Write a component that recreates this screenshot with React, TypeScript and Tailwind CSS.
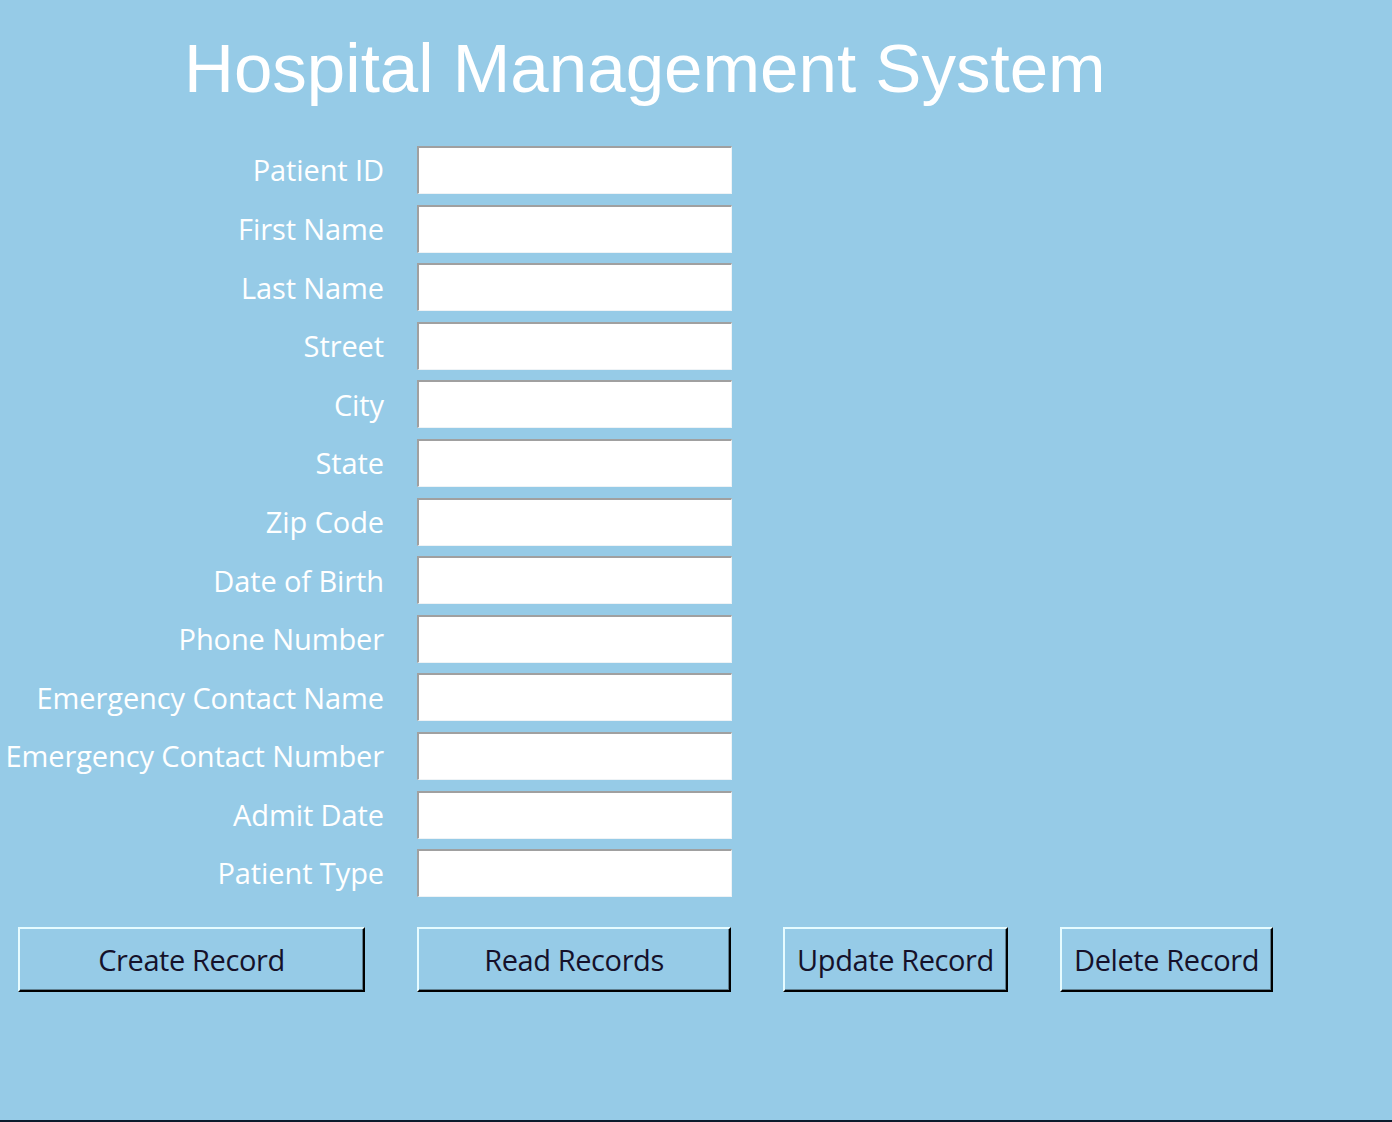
import React from 'react';

const FIELDS = [
  'Patient ID',
  'First Name',
  'Last Name',
  'Street',
  'City',
  'State',
  'Zip Code',
  'Date of Birth',
  'Phone Number',
  'Emergency Contact Name',
  'Emergency Contact Number',
  'Admit Date',
  'Patient Type',
];

const BUTTONS = [
  { label: 'Create Record', width: 'w-[347px]' },
  { label: 'Read Records', width: 'w-[314px]' },
  { label: 'Update Record', width: 'w-[225px]' },
  { label: 'Delete Record', width: 'w-[213px]' },
];

const App: React.FC = () => {
  return (
    <div className="h-[1122px] w-[1392px] overflow-hidden bg-[#96cbe7] border-b-2 border-[#0c1b2c] font-['Open_Sans','Noto_Sans',sans-serif]">
      <h1 className="pt-[34px] pl-[184px] text-[69.1px] leading-none font-normal text-white font-['Liberation_Sans',Arial,sans-serif]">
        Hospital Management System
      </h1>

      <div className="mt-[43px] grid grid-cols-[384px_315px] gap-x-[33px] gap-y-[10.6px]">
        {FIELDS.map((name) => (
          <React.Fragment key={name}>
            <label className="flex h-[48px] items-center justify-end whitespace-nowrap text-[29px] tracking-[-0.1px] text-white">
              {name}
            </label>
            <input
              type="text"
              className="h-[48px] w-[315px] bg-white border-t-2 border-l-2 border-r border-b border-t-[#a0a0a0] border-l-[#a0a0a0] border-r-[#eef3f6] border-b-[#eef3f6] outline-none"
            />
          </React.Fragment>
        ))}
      </div>

      <div className="mt-[30px] flex gap-[52px] pl-[18px]">
        {BUTTONS.map((b) => (
          <button
            key={b.label}
            className={`${b.width} h-[65px] bg-[#96cbe7] border-t-2 border-l-2 border-b-2 border-r-2 border-t-[#e6fbff] border-l-[#e6fbff] border-b-black border-r-black shadow-[inset_-1px_-1px_0_#5f7f90] text-[29px] tracking-[-0.4px] text-[#15112a]`}
          >
            {b.label}
          </button>
        ))}
      </div>
    </div>
  );
};

export default App;
